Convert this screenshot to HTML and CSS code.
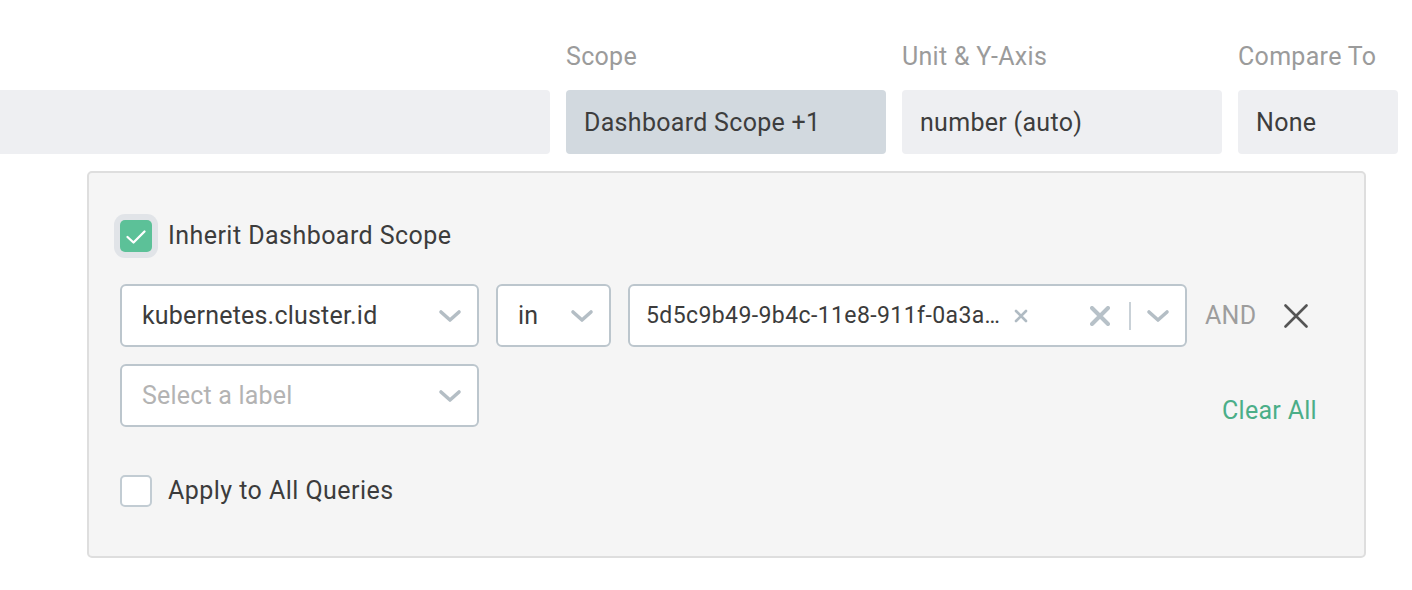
FILE: index.html
```html
<!DOCTYPE html>
<html>
<head>
<meta charset="utf-8">
<link rel="stylesheet" href="styles.css">
</head>
<body>
<div class="top-row">
  <div class="col col-query">
    <div class="col-label">&nbsp;</div>
    <div class="field"></div>
  </div>
  <div class="col col-wide">
    <div class="col-label">Scope</div>
    <div class="field field-active">Dashboard Scope +1</div>
  </div>
  <div class="col col-wide">
    <div class="col-label">Unit &amp; Y-Axis</div>
    <div class="field">number (auto)</div>
  </div>
  <div class="col col-narrow">
    <div class="col-label">Compare To</div>
    <div class="field">None</div>
  </div>
</div>

<div class="panel">
  <label class="check-row">
    <span class="checkbox checked">
      <svg viewBox="0 0 32 32" width="32" height="32"><path d="M7.5 17 L13.5 22.5 L24.5 11.5" fill="none" stroke="#fff" stroke-width="2.3" stroke-linecap="round" stroke-linejoin="round"/></svg>
    </span>
    <span class="check-text">Inherit Dashboard Scope</span>
  </label>

  <div class="filters">
    <div class="filter-row">
      <div class="select sel-label">
        <span class="sel-text">kubernetes.cluster.id</span>
        <svg class="chev" viewBox="0 0 24 14" width="24" height="14"><path d="M3 3 L12 11 L21 3" fill="none" stroke="currentColor" stroke-width="3.6" stroke-linecap="round" stroke-linejoin="round"/></svg>
      </div>
      <div class="select sel-op">
        <span class="sel-text">in</span>
        <svg class="chev" viewBox="0 0 24 14" width="24" height="14"><path d="M3 3 L12 11 L21 3" fill="none" stroke="currentColor" stroke-width="3.6" stroke-linecap="round" stroke-linejoin="round"/></svg>
      </div>
      <div class="select sel-value">
        <span class="chip">
          <span class="chip-text">5d5c9b49-9b4c-11e8-911f-0a3a…</span>
          <svg class="chip-x" viewBox="0 0 14 14" width="14" height="14"><path d="M2 2 L12 12 M12 2 L2 12" stroke="currentColor" stroke-width="2.6" stroke-linecap="round"/></svg>
        </span>
        <span class="indicators">
          <svg class="clear-x" viewBox="0 0 20 20" width="20" height="20"><path d="M2 2 L18 18 M18 2 L2 18" stroke="currentColor" stroke-width="4" stroke-linecap="round"/></svg>
          <span class="sep"></span>
          <svg class="chev" viewBox="0 0 24 14" width="24" height="14"><path d="M3 3 L12 11 L21 3" fill="none" stroke="currentColor" stroke-width="3.6" stroke-linecap="round" stroke-linejoin="round"/></svg>
        </span>
      </div>
      <span class="and">AND</span>
      <svg class="remove" viewBox="0 0 24 24" width="24" height="24"><path d="M1.5 1.5 L22.5 22.5 M22.5 1.5 L1.5 22.5" stroke="currentColor" stroke-width="2.6" stroke-linecap="round"/></svg>
    </div>
    <div class="filter-row row-second">
      <div class="select sel-label">
        <span class="sel-text placeholder">Select a label</span>
        <svg class="chev" viewBox="0 0 24 14" width="24" height="14"><path d="M3 3 L12 11 L21 3" fill="none" stroke="currentColor" stroke-width="3.6" stroke-linecap="round" stroke-linejoin="round"/></svg>
      </div>
      <a class="clear-all">Clear All</a>
    </div>
  </div>

  <label class="check-row apply-row">
    <span class="checkbox"></span>
    <span class="check-text">Apply to All Queries</span>
  </label>
</div>
</body>
</html>
```

FILE: styles.css
```css
* { box-sizing: border-box; }

html, body {
  margin: 0;
  padding: 0;
  background: #fff;
  font-family: Roboto, "Liberation Sans", Arial, sans-serif;
  color: #3c3c3c;
  overflow: hidden;
}

.top-row {
  display: flex;
  gap: 16px;
  margin-left: -10px;
  padding-top: 43px;
}

.col {
  display: flex;
  flex-direction: column;
}

.col-query { width: 560px; }
.col-wide { width: 320px; }
.col-narrow { width: 160px; }

.col-label {
  font-size: 25px;
  letter-spacing: 0.3px;
  line-height: 28px;
  color: #9b9b9b;
  margin-bottom: 19px;
  white-space: nowrap;
}

.field {
  height: 64px;
  border-radius: 4px;
  background: #eeeff2;
  display: flex;
  align-items: center;
  padding-left: 18px;
  font-size: 25px;
  letter-spacing: 0.3px;
  color: #3d3d3d;
  white-space: nowrap;
}

.field-active { background: #d2d9df; }

.panel {
  margin-left: 87px;
  margin-top: 17px;
  width: 1279px;
  height: 387px;
  background: #f5f5f5;
  border: 2px solid #dedede;
  border-radius: 5px;
  padding: 47px 0 0 31px;
}

.check-row {
  display: flex;
  align-items: center;
  gap: 16px;
  font-size: 25px;
  letter-spacing: 0.45px;
  line-height: 32px;
  color: #3c3c3c;
}

.checkbox {
  width: 32px;
  height: 32px;
  border-radius: 5px;
  border: 2px solid #c2ccd3;
  background: #fff;
  flex: none;
  display: flex;
}

.checkbox.checked {
  background: #5cc198;
  border: none;
  box-shadow: 0 0 0 6px #e1e4e8;
}

.filters {
  margin-top: 32px;
  display: flex;
  flex-direction: column;
  gap: 17px;
}

.filter-row {
  display: flex;
  align-items: center;
  gap: 17px;
}

.select {
  height: 63px;
  border: 2px solid #bcc6cd;
  border-radius: 6px;
  background: #fff;
  display: flex;
  align-items: center;
  justify-content: space-between;
  padding: 0 15px 0 20px;
  color: #b4bec5;
  flex: none;
}

.sel-label { width: 359px; }
.sel-op { width: 115px; }
.sel-value { width: 559px; padding-left: 16px; }

.sel-text {
  font-size: 25px;
  letter-spacing: 0.2px;
  color: #3c3c3c;
  white-space: nowrap;
}

.sel-text.placeholder { color: #b3b3b3; }

.chip {
  display: flex;
  align-items: center;
  gap: 14px;
}

.chip-text {
  font-size: 23px;
  letter-spacing: 0.4px;
  color: #3c3c3c;
  white-space: nowrap;
}

.chip-x { color: #b0bbc3; }

.indicators {
  display: flex;
  align-items: center;
}

.clear-x { color: #b7c1c8; }

.sep {
  width: 2px;
  height: 28px;
  background: #c9d1d7;
  margin: 0 15px 0 19px;
}

.and {
  font-size: 25px;
  letter-spacing: 0.3px;
  color: #9d9d9d;
  margin-left: 1px;
}

.remove {
  color: #555;
  margin-left: 11px;
}

.row-second {
  align-items: flex-end;
  justify-content: space-between;
  padding-right: 47px;
}

.clear-all {
  font-size: 25px;
  letter-spacing: 0.3px;
  line-height: 28px;
  color: #4bae88;
  margin-bottom: 2px;
  cursor: pointer;
}

.apply-row { margin-top: 48px; }
```
